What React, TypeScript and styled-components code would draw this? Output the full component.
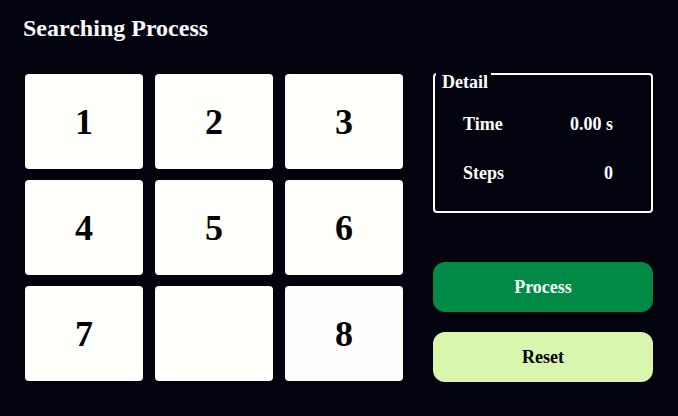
import React from "react";
import styled, { createGlobalStyle } from "styled-components";

const GlobalStyle = createGlobalStyle`
  html, body {
    margin: 0;
    padding: 0;
    background: #03030f;
  }
  body {
    font-family: "Liberation Serif", "Times New Roman", serif;
  }
`;

const Page = styled.div`
  width: 678px;
  height: 416px;
  box-sizing: border-box;
  padding: 14px 0 0 0;
  color: #fff;
`;

const Title = styled.h1`
  margin: 0 0 0 23px;
  font-size: 24px;
  line-height: 28px;
  font-weight: bold;
  color: #fbfbff;
`;

const Main = styled.div`
  display: flex;
  gap: 30px;
  margin-top: 32px;
  padding-left: 25px;
`;

const Board = styled.div`
  display: grid;
  grid-template-columns: repeat(3, 118px);
  grid-template-rows: repeat(3, 95px);
  column-gap: 12px;
  row-gap: 11px;
`;

const Tile = styled.div<{ $tint?: string }>`
  display: flex;
  align-items: center;
  justify-content: center;
  border-radius: 4px;
  background: ${(p) => p.$tint || "#fffffb"};
  color: #000;
  font-size: 36px;
  font-weight: bold;
`;

const Side = styled.div`
  width: 220px;
  display: flex;
  flex-direction: column;
  margin-top: -1px;
`;

const DetailBox = styled.div`
  position: relative;
  border: 2px solid #fff;
  border-radius: 4px;
  height: 140px;
  box-sizing: border-box;
  padding: 38px 38px 0 28px;
  display: flex;
  flex-direction: column;
  gap: 27px;
`;

const Legend = styled.span`
  position: absolute;
  top: -3px;
  left: 1px;
  padding: 0 3px 0 6px;
  background: #03030f;
  font-size: 18px;
  line-height: 20px;
  font-weight: bold;
`;

const StatRow = styled.div`
  display: flex;
  justify-content: space-between;
  font-size: 18px;
  line-height: 22px;
  font-weight: bold;
`;

const Button = styled.button<{ $primary?: boolean }>`
  height: 50px;
  border: none;
  border-radius: 12px;
  font-family: "Liberation Serif", "Times New Roman", serif;
  font-size: 18px;
  font-weight: bold;
  background: ${(p) => (p.$primary ? "#008a45" : "#d9f6ae")};
  color: ${(p) => (p.$primary ? "#f4fff8" : "#000")};
  cursor: pointer;
`;

const Buttons = styled.div`
  display: flex;
  flex-direction: column;
  gap: 20px;
  margin-top: 49px;
`;

const tiles: (number | null)[] = [1, 2, 3, 4, 5, 6, 7, null, 8];

export default function App() {
  return (
    <>
      <GlobalStyle />
      <Page>
        <Title>Searching Process</Title>
        <Main>
          <Board>
            {tiles.map((t, i) => (
              <Tile key={i} $tint={t === 8 ? "#fdfdff" : undefined}>
                {t ?? ""}
              </Tile>
            ))}
          </Board>
          <Side>
            <DetailBox>
              <Legend>Detail</Legend>
              <StatRow>
                <span>Time</span>
                <span>0.00 s</span>
              </StatRow>
              <StatRow>
                <span>Steps</span>
                <span>0</span>
              </StatRow>
            </DetailBox>
            <Buttons>
              <Button $primary>Process</Button>
              <Button>Reset</Button>
            </Buttons>
          </Side>
        </Main>
      </Page>
    </>
  );
}
